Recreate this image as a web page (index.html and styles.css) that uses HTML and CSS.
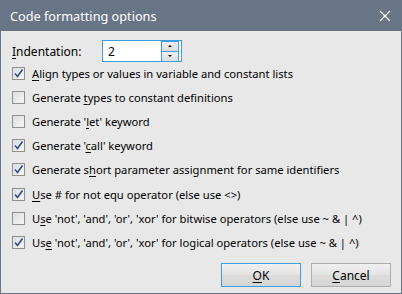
FILE: index.html
```html
<!DOCTYPE html>
<html lang="en">
<head>
  <meta charset="UTF-8" />
  <title>Code formatting options</title>
  <link rel="stylesheet" href="styles.css">
</head>
<body>

  <div class="window">
    <div class="titlebar">
      <span class="title">Code formatting options</span>
      <svg class="close" width="12" height="12" viewBox="0 0 12 12">
        <path d="M1 1 L11 11 M11 1 L1 11" stroke="#ffffff" stroke-width="1.2" fill="none" />
      </svg>
    </div>

    <div class="content">
      <div class="indent-row">
        <label for="indent"><u>I</u>ndentation:</label>
        <div class="spin">
          <input type="text" id="indent" value="2" />
          <div class="spin-buttons">
            <div class="spin-btn"><span class="arrow-up"></span></div>
            <div class="spin-btn"><span class="arrow-down"></span></div>
          </div>
        </div>
      </div>

      <div class="options">
        <div class="option"><span class="box"><svg class="tick" viewBox="0 0 11 11"><path d="M2 5.5 L4.5 8.5 L9.5 1.5" /></svg></span><span><u>A</u>lign types or values in variable and constant lists</span></div>
        <div class="option"><span class="box"></span><span>Generate <u>t</u>ypes to constant definitions</span></div>
        <div class="option"><span class="box"></span><span>Generate '<u>l</u>et' keyword</span></div>
        <div class="option"><span class="box"><svg class="tick" viewBox="0 0 11 11"><path d="M2 5.5 L4.5 8.5 L9.5 1.5" /></svg></span><span>Generate '<u>c</u>all' keyword</span></div>
        <div class="option"><span class="box"><svg class="tick" viewBox="0 0 11 11"><path d="M2 5.5 L4.5 8.5 L9.5 1.5" /></svg></span><span>Generate s<u>h</u>ort parameter assignment for same identifiers</span></div>
        <div class="option"><span class="box"><svg class="tick" viewBox="0 0 11 11"><path d="M2 5.5 L4.5 8.5 L9.5 1.5" /></svg></span><span><u>U</u>se # for not equ operator (else use &lt;&gt;)</span></div>
        <div class="option"><span class="box"></span><span>U<u>s</u>e 'not', 'and', 'or', 'xor' for bitwise operators (else use ~ &amp; | ^)</span></div>
        <div class="option"><span class="box"><svg class="tick" viewBox="0 0 11 11"><path d="M2 5.5 L4.5 8.5 L9.5 1.5" /></svg></span><span>Us<u>e</u> 'not', 'and', 'or', 'xor' for logical operators (else use ~ &amp; | ^)</span></div>
      </div>

      <div class="buttons">
        <button class="btn default"><u>O</u>K</button>
        <button class="btn"><u>C</u>ancel</button>
      </div>
    </div>
  </div>

</body>
</html>
```

FILE: styles.css
```css
body {
  margin: 0;
  font-family: "Noto Sans", Arial, sans-serif;
  font-size: 11.2px;
  color: #000;
}
u {
  text-decoration-thickness: 1px;
  text-underline-offset: 2px;
}
.window {
  width: 402px;
  height: 294px;
  box-sizing: border-box;
  border: 1px solid #687587;
  border-top: none;
  background-color: #e8e8e8;
  display: flex;
  flex-direction: column;
}
.titlebar {
  height: 31px;
  margin: 0 -1px;
  background-color: #687587;
  display: flex;
  align-items: center;
  justify-content: space-between;
  padding: 0 11px 0 10px;
  flex-shrink: 0;
}
.title {
  color: #ffffff;
  font-size: 12.7px;
}
.content {
  flex: 1;
  display: flex;
  flex-direction: column;
  padding: 9px 10px 6px 11px;
}
.indent-row {
  display: flex;
  align-items: center;
  height: 22px;
}
.indent-row label {
  width: 90px;
  font-size: 12px;
}
.spin {
  width: 80px;
  height: 22px;
  box-sizing: border-box;
  border: 1px solid #3c9ee0;
  background: #ffffff;
  display: flex;
  align-items: center;
}
.spin input {
  flex: 1;
  width: 40px;
  border: none;
  outline: none;
  padding: 0 0 0 5px;
  font-family: inherit;
  font-size: 12px;
  background: transparent;
}
.spin-buttons {
  display: flex;
  flex-direction: column;
  margin-right: 2px;
}
.spin-btn {
  width: 16px;
  height: 9px;
  border: 1px solid #3c9ee0;
  background: linear-gradient(#f2f2f2, #dcdcdc);
  display: flex;
  align-items: center;
  justify-content: center;
}
.spin-btn + .spin-btn {
  border-top: none;
}
.arrow-up {
  border-left: 2px solid transparent;
  border-right: 2px solid transparent;
  border-bottom: 2px solid #000;
}
.arrow-down {
  border-left: 2px solid transparent;
  border-right: 2px solid transparent;
  border-top: 2px solid #000;
}
.options {
  display: flex;
  flex-direction: column;
  margin-top: -1px;
}
.option {
  display: flex;
  align-items: center;
  height: 24.2px;
  gap: 7px;
}
.box {
  width: 13px;
  height: 13px;
  box-sizing: border-box;
  border: 1px solid #8e8f8f;
  background: linear-gradient(135deg, #dedede, #f4f4f4);
  flex-shrink: 0;
  display: flex;
}
.tick {
  width: 11px;
  height: 11px;
}
.tick path {
  fill: none;
  stroke: #2c4e87;
  stroke-width: 1.6;
}
.buttons {
  margin-top: auto;
  display: flex;
  justify-content: flex-end;
  gap: 10px;
}
.btn {
  width: 80px;
  height: 24px;
  font-family: inherit;
  font-size: 12px;
  color: #000;
  border: 1px solid #adadad;
  background: linear-gradient(#f0f0f0, #e3e3e3 50%, #dcdcdc 51%, #d6d6d6);
  padding: 0;
}
.btn.default {
  border-color: #3c9ee0;
}
```
